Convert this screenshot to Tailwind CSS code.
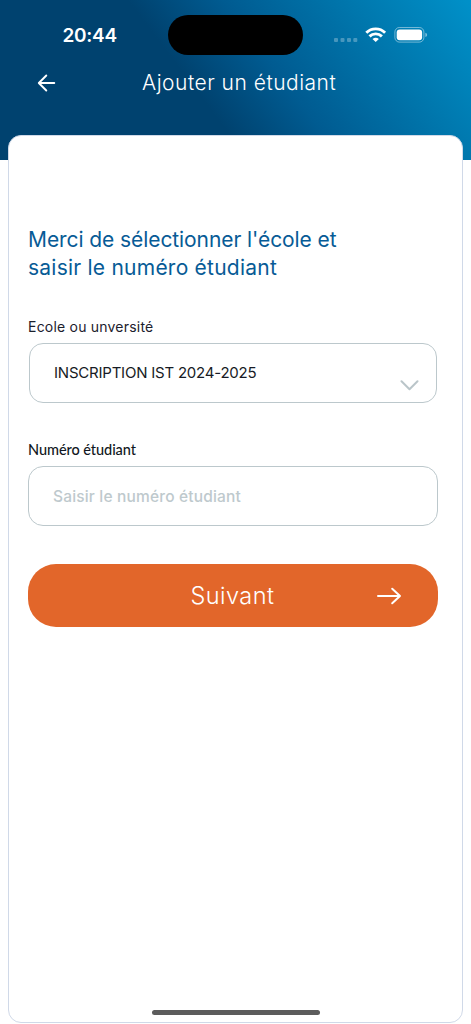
<!DOCTYPE html>
<html lang="fr">
<head>
<meta charset="utf-8">
<meta name="viewport" content="width=device-width, initial-scale=1">
<title>Ajouter un étudiant</title>
<script src="https://cdn.jsdelivr.net/npm/@tailwindcss/browser@4"></script>
</head>
<body class="h-[1024px] w-[471px] overflow-hidden bg-white font-['Inter',sans-serif]">
<div class="relative h-[1024px] w-[471px]">
  <header class="h-[160px] bg-[linear-gradient(53deg,#00426f_42%,#005b91_58%,#0078ae_80%,#0091c9_100%)] pt-[15px] text-white">
    <div class="flex h-10 items-center">
      <time class="ml-[62.500px] w-[105.500px] whitespace-nowrap text-[19px] leading-none font-semibold tracking-[-0.3px]">20:44</time>
      <div class="h-[39.500px] w-[134.500px] rounded-full bg-black"></div>
      <svg class="ml-[30.500px] h-[18px] w-[96px]" viewBox="333 26 96 18" fill="none">
        <g fill="#fff" fill-opacity=".28"><rect x="334" y="38" width="4" height="4" rx="1"/><rect x="340.500" y="38" width="4" height="4" rx="1"/><rect x="347" y="38" width="4" height="4" rx="1"/><rect x="353.300" y="38" width="4" height="4" rx="1"/></g>
        <g stroke="#fff" stroke-width="2.900"><path d="M366.300 32.700a13.400 13.400 0 0 1 18.800 0"/><path d="M369.500 36.400a8.900 8.900 0 0 1 12.400 0"/></g>
        <path fill="#fff" d="M372.500 39q3.200-2.500 6.400 0L375.700 42z"/>
        <rect x="394.900" y="27.500" width="29" height="14.600" rx="4.500" stroke="#fff" stroke-opacity=".45"/>
        <rect x="396.700" y="29.400" width="25.400" height="10.800" rx="3" fill="#fff"/>
        <path fill="#fff" fill-opacity=".5" d="M425.400 32.700q1.700.6 1.700 2.200t-1.700 2.200z"/>
      </svg>
    </div>
    <div class="flex h-[56px] items-center">
      <svg class="ml-[37px] h-[18px] w-[19px]" viewBox="0 0 19 18" fill="none" stroke="#fff" stroke-width="1.900" stroke-linecap="round" stroke-linejoin="round"><path d="M17.300 9H2M9.300 1.500L1.800 9l7.500 7.500"/></svg>
      <h1 class="ml-[86px] whitespace-nowrap text-[21px] leading-7 font-[350] tracking-[0.500px]">Ajouter un étudiant</h1>
    </div>
  </header>
  <main class="relative -mt-[25px] ml-2 flex h-[888px] w-[455px] flex-col rounded-[13px] border-[1.500px] border-[#d0d9e8] bg-white pl-[19px]">
    <h2 class="mt-[90px] whitespace-nowrap text-[21px] leading-7 text-[#075b96]"><span class="tracking-[-0.080px]">Merci de sélectionner l'école et</span><br><span class="tracking-[0.230px]">saisir le numéro étudiant</span></h2>
    <label class="mt-[35px] h-5 text-[14px] leading-5 tracking-[0.210px] text-[#1b202c]"><span>Ecole ou unversité</span></label>
    <div class="mt-[6px] ml-px flex h-[60px] w-[408px] items-center justify-between rounded-[14px] border border-[#bcc8cc] pr-[17px] pl-6">
      <span class="text-[15px] leading-5 tracking-[-0.220px] text-[#171b25]">INSCRIPTION IST 2024-2025</span>
      <svg class="mt-[24px] h-[11px] w-[19px]" viewBox="0 0 19 11" fill="none" stroke="#bac5c9" stroke-width="2" stroke-linecap="round" stroke-linejoin="round"><path d="M1.500 1.300l8 8 8-8"/></svg>
    </div>
    <label class="mt-[37px] h-5 font-['Lato',sans-serif] text-[14.500px] leading-5 font-medium tracking-[-0.060px] text-[#111722]"><span>Numéro étudiant</span></label>
    <div class="mt-[6px] flex h-[60px] w-[410px] items-center rounded-[15px] border border-[#bcc8cc] pt-[2px] pl-6">
      <span class="text-[15.500px] leading-5 font-medium tracking-[0.180px] text-[#bec9cd]">Saisir le numéro étudiant</span>
    </div>
    <button class="mt-[38px] flex h-[63px] w-[410px] items-center rounded-[28px] bg-[#e2662a] text-white">
      <span class="ml-[162.500px] w-[185.500px] text-left text-[23.500px] leading-8 font-[350] tracking-[0.450px]">Suivant</span>
      <svg class="h-[18px] w-[26px]" viewBox="0 0 26 18" fill="none" stroke="#fff" stroke-width="2" stroke-linecap="round" stroke-linejoin="round"><path d="M2 9h22M16.200 1.700L24 9l-7.800 7.300"/></svg>
    </button>
  </main>
  <div class="absolute top-[1009.500px] left-[151.500px] h-[5.500px] w-[168.500px] rounded-full bg-[#5c5c5c]"></div>
</div>
</body>
</html>
